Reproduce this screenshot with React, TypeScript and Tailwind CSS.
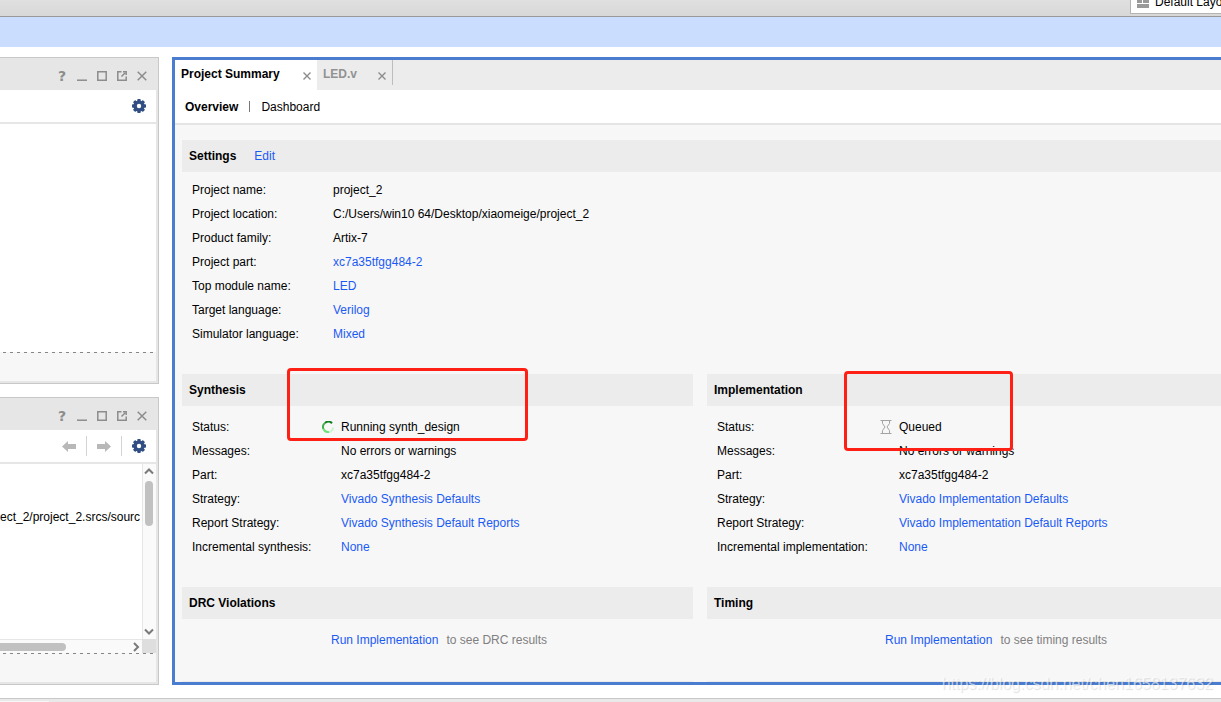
import { ReactNode, useState } from "react";

type Row = {
  label: string;
  value: string;
  link?: boolean;
  icon?: ReactNode;
};

const settings: Row[] = [
  { label: "Project name:", value: "project_2" },
  {
    label: "Project location:",
    value: "C:/Users/win10 64/Desktop/xiaomeige/project_2",
  },
  { label: "Product family:", value: "Artix-7" },
  { label: "Project part:", value: "xc7a35tfgg484-2", link: true },
  { label: "Top module name:", value: "LED", link: true },
  { label: "Target language:", value: "Verilog", link: true },
  { label: "Simulator language:", value: "Mixed", link: true },
];

const Spinner = () => (
  <svg width="12" height="12" viewBox="0 0 12 12" fill="none" strokeWidth="2">
    <path d="M10 2.2A5 5 0 0 0 3 2" stroke="#0f7d1c" />
    <path d="M3 2A5 5 0 0 0 1.5 8" stroke="#3fb04a" />
    <path d="M1.5 8A5 5 0 0 0 7 11" stroke="#6fe07a" />
    <path d="M7 11A5 5 0 0 0 11 6.5" stroke="#c9f5cd" />
  </svg>
);

const Hourglass = () => (
  <svg width="12" height="14" viewBox="0 0 12 14" fill="none" stroke="#a3a3a3">
    <path d="M0.5 0.5h11M0.5 13.5h11M2.5 1v2.5L5 7l-2.5 3.5V13M9.5 1v2.5L7 7l2.5 3.5V13" />
  </svg>
);

const synthesis: Row[] = [
  { label: "Status:", value: "Running synth_design", icon: <Spinner /> },
  { label: "Messages:", value: "No errors or warnings" },
  { label: "Part:", value: "xc7a35tfgg484-2" },
  { label: "Strategy:", value: "Vivado Synthesis Defaults", link: true },
  {
    label: "Report Strategy:",
    value: "Vivado Synthesis Default Reports",
    link: true,
  },
  { label: "Incremental synthesis:", value: "None", link: true },
];

const implementation: Row[] = [
  { label: "Status:", value: "Queued", icon: <Hourglass /> },
  { label: "Messages:", value: "No errors or warnings" },
  { label: "Part:", value: "xc7a35tfgg484-2" },
  { label: "Strategy:", value: "Vivado Implementation Defaults", link: true },
  {
    label: "Report Strategy:",
    value: "Vivado Implementation Default Reports",
    link: true,
  },
  { label: "Incremental implementation:", value: "None", link: true },
];

const Gear = () => (
  <svg width="14" height="14" viewBox="0 0 14 14">
    <g fill="#314e84">
      <rect x="5.3" width="3.4" height="14" rx="0.8" />
      <rect x="5.3" width="3.4" height="14" rx="0.8" transform="rotate(45 7 7)" />
      <rect x="5.3" width="3.4" height="14" rx="0.8" transform="rotate(90 7 7)" />
      <rect x="5.3" width="3.4" height="14" rx="0.8" transform="rotate(135 7 7)" />
      <circle cx="7" cy="7" r="5.6" />
    </g>
    <circle cx="7" cy="7" r="2.2" fill="#fff" />
  </svg>
);

const Arrow = ({ flip }: { flip?: boolean }) => (
  <svg
    width="14"
    height="11"
    viewBox="0 0 14 11"
    fill="#b8b8b8"
    className={flip ? "rotate-180" : ""}
  >
    <path d="M0 5.5L6 0v3h8v5H6v3z" />
  </svg>
);

const CloseIcon = () => (
  <svg width="8" height="8" viewBox="0 0 8 8" stroke="#8c8c8c" strokeWidth="1.4">
    <path d="M0.5 0.5l7 7M7.5 0.5l-7 7" />
  </svg>
);

const windowIcons = [
  { name: "Minimize", d: "M0 9.2h10" },
  { name: "Maximize", d: "M0.8 0.8h8.4v8.4H0.8z" },
  { name: "Float", d: "M4.5 0.8H0.8v8.4h8.4V5.5M4.5 5.5L8 2M6 0.8h3.2V4" },
  { name: "Close", d: "M0.7 0.7l8.6 8.6M9.3 0.7L0.7 9.3" },
];

const PanelHeader = () => (
  <div className="flex h-8 shrink-0 items-center justify-end gap-[10px] pt-1 pr-[11px]">
    <button
      type="button"
      aria-label="Help"
      className="w-[10px] text-center font-['DejaVu_Sans'] text-[14px] leading-none font-bold text-[#8c8c8c]"
    >
      ?
    </button>
    {windowIcons.map((icon) => (
      <button key={icon.name} type="button" aria-label={icon.name}>
        <svg
          width="10"
          height="10"
          viewBox="0 0 10 10"
          fill="none"
          stroke="#8c8c8c"
          strokeWidth="1.5"
        >
          <path d={icon.d} />
        </svg>
      </button>
    ))}
  </div>
);

const Panel = ({
  tools,
  className,
  children,
}: {
  tools?: ReactNode;
  className: string;
  children?: ReactNode;
}) => (
  <section
    className={`flex flex-col border-y border-r border-[#c8c8c8] bg-[#e6e6e6] ${className}`}
  >
    <PanelHeader />
    <div className="mr-[2px] flex h-8 shrink-0 items-center justify-end gap-[10px] bg-white pr-[10px]">
      {tools}
      <button type="button" aria-label="Settings">
        <Gear />
      </button>
    </div>
    <div className="mt-[2px] mr-[2px] mb-[2px] flex flex-1 flex-col bg-white">
      {children}
      <div className="h-px bg-[repeating-linear-gradient(to_right,#f7f7f7_0_3px,#868686_3px_6px,#f7f7f7_6px_7px)]" />
      <div className="h-7 bg-[#f7f7f7]" />
    </div>
  </section>
);

const Chevron = ({ d }: { d: string }) => (
  <svg
    width="10"
    height="10"
    viewBox="0 0 10 10"
    fill="none"
    stroke="#7a7a7a"
    strokeWidth="2"
  >
    <path d={d} />
  </svg>
);

const Bar = ({ title, children }: { title: string; children?: ReactNode }) => (
  <div className="flex h-8 items-center gap-[18px] bg-[#ececec] px-[7px]">
    <h2 className="font-bold">{title}</h2>
    {children}
  </div>
);

const Link = ({ children }: { children: ReactNode }) => (
  <a href="#" className="text-[#1a5af5]">
    {children}
  </a>
);

const Rows = ({ rows, labelWidth }: { rows: Row[]; labelWidth: string }) => (
  <dl className="pl-[10px]">
    {rows.map((row) => (
      <div key={row.label} className="flex h-6 items-center">
        <dt className={`flex shrink-0 items-center justify-between ${labelWidth}`}>
          {row.label}
          {row.icon}
        </dt>
        <dd className="whitespace-nowrap">
          {row.link ? <Link>{row.value}</Link> : row.value}
        </dd>
      </div>
    ))}
  </dl>
);

const App = () => {
  const [layout, setLayout] = useState("Default Layout");

  return (
    <div className="relative flex min-h-screen flex-col overflow-hidden bg-white font-['Liberation_Sans',Arial,sans-serif] text-[12px] leading-4 text-black">
      {/* Toolbar */}
      <div className="flex h-[17px] items-end justify-end overflow-hidden border-b border-[#999] bg-linear-to-b from-[#e0e0e0] to-[#d8d8d8] pb-[2px]">
        <div className="-mr-10 flex h-6 w-[131px] shrink-0 items-center gap-[6px] border border-[#b4b4b4] bg-white pl-[6px]">
          <svg width="12" height="12" viewBox="0 0 12 12" fill="#9a9a9a">
            <path d="M0 0h5v7H0zM6 0h6v7H6zM0 8h12v4H0z" />
          </svg>
          <select
            aria-label="Layout"
            value={layout}
            onChange={(e) => setLayout(e.target.value)}
            className="flex-1 appearance-none"
          >
            <option>Default Layout</option>
          </select>
        </div>
      </div>
      <div className="h-[30px] bg-[#cbddfe]" />

      <div className="flex gap-[13px] pt-[10px] pb-[13px]">
        {/* Left panels */}
        <div className="flex w-[159px] shrink-0 flex-col gap-[13px]">
          <Panel className="h-[327px]">
            <div className="flex-1" />
          </Panel>
          <Panel
            className="flex-1"
            tools={
              <>
                <button type="button" aria-label="Back">
                  <Arrow />
                </button>
                <span className="h-5 w-px bg-[#d4d4d4]" />
                <button type="button" aria-label="Forward">
                  <Arrow flip />
                </button>
                <span className="h-5 w-px bg-[#d4d4d4]" />
              </>
            }
          >
            <div className="grid flex-1 grid-cols-[1fr_14px] grid-rows-[1fr_14px]">
              <div className="overflow-hidden pt-[45px] whitespace-nowrap">
                ect_2/project_2.srcs/sourc
              </div>
              <div className="flex flex-col items-center justify-between border-l border-[#e6e6e6] bg-[#fafafa] py-[2px] pr-px">
                <Chevron d="M1 7.5l4-4 4 4" />
                <div className="mt-[5px] mb-auto h-[45px] w-2 rounded-full bg-[#c1c1c1]" />
                <Chevron d="M1 2.5l4 4 4-4" />
              </div>
              <div className="flex items-center justify-between border-t border-[#e6e6e6] bg-[#fafafa] pr-px">
                <div className="h-2 w-[66px] rounded-r-full bg-[#c1c1c1]" />
                <Chevron d="M3 1l4 4-4 4" />
              </div>
              <div className="bg-[#dedede]" />
            </div>
          </Panel>
        </div>

        {/* Project summary */}
        <main className="min-w-0 flex-1 border-y-[3px] border-l-[3px] border-[#4a7dcf] bg-[#f7f7f7]">
          <div className="flex h-[30px] bg-[#ececec]">
            <div className="flex w-[142px] items-center justify-between bg-white pr-[6px] pl-[6px]">
              <button type="button" className="pb-[2px] font-bold">
                Project Summary
              </button>
              <button type="button" aria-label="Close Project Summary" className="pt-[2px]">
                <CloseIcon />
              </button>
            </div>
            <div className="flex w-[75px] items-center justify-between pr-[6px] pl-[6px]">
              <button type="button" className="pb-[2px] font-bold text-[#929292]">
                LED.v
              </button>
              <button type="button" aria-label="Close LED.v" className="pt-[2px]">
                <CloseIcon />
              </button>
            </div>
            <div className="h-[25px] w-px bg-[#bdbdbd]" />
          </div>
          <nav className="flex h-[35px] items-center gap-[11px] border-b-2 border-[#e4e4e4] bg-white pl-[10px]">
            <button type="button" className="font-bold">
              Overview
            </button>
            <span className="h-[11px] w-px bg-[#777]" />
            <button type="button">Dashboard</button>
          </nav>

          <div className="pt-[15px] pl-[7px]">
            <section>
              <Bar title="Settings">
                <Link>Edit</Link>
              </Bar>
              <div className="pt-[6px] pb-7">
                <Rows rows={settings} labelWidth="w-[141px]" />
              </div>
            </section>

            <div className="grid grid-cols-[minmax(0,511fr)_minmax(0,514fr)] gap-x-[14px]">
              <section className="relative">
                <Bar title="Synthesis" />
                <div className="pt-[9px] pb-7">
                  <Rows rows={synthesis} labelWidth="w-[149px] pr-[7px]" />
                </div>
                <div className="pointer-events-none absolute -top-[6px] left-[105px] h-[73px] w-[241px] rounded-[4px] border-3 border-[#ff2015]" />
              </section>
              <section className="relative">
                <Bar title="Implementation" />
                <div className="pt-[9px] pb-7">
                  <Rows rows={implementation} labelWidth="w-[182px] pr-[7px]" />
                </div>
                <div className="pointer-events-none absolute -top-[3px] left-[137px] h-[80px] w-[169px] rounded-[4px] border-3 border-[#ff2015]" />
              </section>

              <section>
                <Bar title="DRC Violations" />
                <p className="flex h-[62px] gap-2 pt-[13px] pl-[149px] text-[#808080]">
                  <Link>Run Implementation</Link>
                  <span>to see DRC results</span>
                </p>
              </section>
              <section>
                <Bar title="Timing" />
                <p className="flex h-[62px] gap-2 pt-[13px] pl-[178px] text-[#808080]">
                  <Link>Run Implementation</Link>
                  <span>to see timing results</span>
                </p>
              </section>
              <div className="h-px bg-[#ececec]" />
              <div className="h-px bg-[#ececec]" />
            </div>
          </div>
        </main>
      </div>

      {/* Bottom strip */}
      <div className="flex-1 border-t border-[#c8c8c8] bg-[#e9e9e9] pt-[2px]">
        <div className="h-px w-[49px] bg-[#f7f7f7]" />
      </div>

      <div className="pointer-events-none absolute right-2 bottom-2 text-[16px] leading-5 text-white/60 [text-shadow:1px_1px_1px_rgba(0,0,0,0.12)]">
        https://blog.csdn.net/chen1658137632
      </div>
    </div>
  );
};

export default App;
